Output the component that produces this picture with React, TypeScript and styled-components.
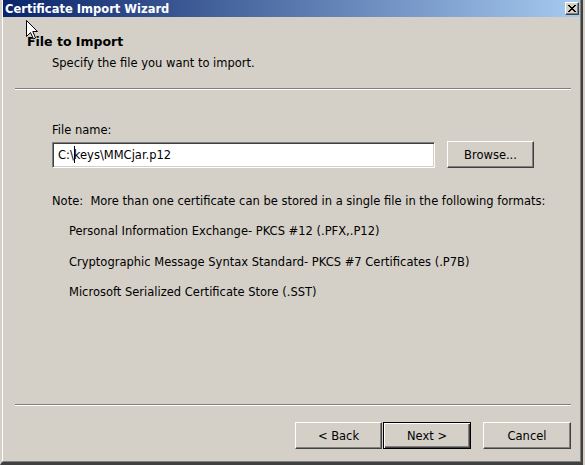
import styled, { createGlobalStyle } from "styled-components"

const GlobalStyle = createGlobalStyle`
  html, body {
    margin: 0;
    padding: 0;
    background: #d4d0c8;
    overflow: hidden;
  }
  body {
    font-family: "DejaVu Sans", "Liberation Sans", sans-serif;
    font-size: 11.5px;
    color: #000;
  }
`

const App = () => {
  return (
    <>
      <GlobalStyle />
      <Window>
        <Frame>
          <TitleBar>
            <TitleText>Certificate Import Wizard</TitleText>
            <CloseButton>
              <svg width="8" height="7" viewBox="0 0 8 7">
                <path d="M0 0h2v1h1v1h2V1h1V0h2v1H7v1H6v1H5v1h1v1h1v1h1v1H6V6H5V5H3v1H2v1H0V6h1V5h1V4h1V3H2V2H1V1H0z" fill="#000" />
              </svg>
            </CloseButton>
          </TitleBar>

          <Header>
            <Heading>File to Import</Heading>
            <SubHeading>Specify the file you want to import.</SubHeading>
          </Header>
          <Separator />

          <Content>
            <Label>File name:</Label>
            <FileRow>
              <TextBox>
                C:\<Caret />keys\MMCjar.p12
              </TextBox>
              <Button>Browse...</Button>
            </FileRow>
            <Note>Note:&nbsp; More than one certificate can be stored in a single file in the following formats:</Note>
            <FormatList>
              <li>Personal Information Exchange- PKCS #12 (.PFX,.P12)</li>
              <li>Cryptographic Message Syntax Standard- PKCS #7 Certificates (.P7B)</li>
              <li>Microsoft Serialized Certificate Store (.SST)</li>
            </FormatList>
          </Content>

          <Separator />
          <Footer>
            <Button>&lt; Back</Button>
            <Button isDefault wide>Next &gt;</Button>
            <Button wide gap={12}>Cancel</Button>
          </Footer>
        </Frame>

        <Pointer width="12" height="20" viewBox="0 0 12 20">
          <path d="M0.5 0.5 V16.5 L4.5 12.5 L7.5 19 L9.5 18 L6.8 11.5 H11.5 Z" fill="#fff" stroke="#000" strokeWidth="1" />
        </Pointer>
      </Window>
    </>
  )
}

type ButtonProps = {
  isDefault?: boolean;
  wide?: boolean;
  gap?: number;
}

const Window = styled.div`
  position: relative;
  width: 583px;
  height: 465px;
  box-sizing: border-box;
  border-left: 2px solid #d4d0c8;
  border-right: 2px solid #404040;
  border-bottom: 3px solid #404040;
`

const Frame = styled.div`
  height: 100%;
  box-sizing: border-box;
  display: flex;
  flex-direction: column;
  border-left: 1px solid #fff;
  border-right: 1px solid #808080;
  border-bottom: 1px solid #808080;
`

const TitleBar = styled.div`
  height: 17px;
  flex-shrink: 0;
  display: flex;
  align-items: center;
  justify-content: space-between;
  padding: 0 1px 0 2px;
  background: linear-gradient(to right, #0a246a, #a6caf0);
`

const TitleText = styled.span`
  color: #fff;
  font-weight: bold;
  font-size: 11.5px;
`

const CloseButton = styled.div`
  width: 14px;
  height: 13px;
  box-sizing: border-box;
  display: flex;
  align-items: center;
  justify-content: center;
  background: #d4d0c8;
  border-top: 1px solid #fff;
  border-left: 1px solid #fff;
  border-right: 1px solid #404040;
  border-bottom: 1px solid #404040;
  box-shadow: inset -1px -1px 0 #808080;
`

const Header = styled.div`
  height: 71px;
  flex-shrink: 0;
  box-sizing: border-box;
  padding: 17px 0 0 24px;
`

const Heading = styled.div`
  font-weight: bold;
  font-size: 12.5px;
  line-height: 16px;
`

const SubHeading = styled.div`
  margin: 6px 0 0 25px;
  line-height: 14px;
`

const Separator = styled.div`
  height: 0;
  flex-shrink: 0;
  margin: 0 9px 0 12px;
  border-top: 1px solid #808080;
  border-bottom: 1px solid #fff;
`

const Content = styled.div`
  flex: 1;
  padding: 33px 0 0 49px;
  line-height: 14px;
`

const Label = styled.div`
  margin-bottom: 4px;
`

const FileRow = styled.div`
  display: flex;
  align-items: center;
  gap: 12px;
`

const TextBox = styled.div`
  width: 383px;
  height: 26px;
  box-sizing: border-box;
  display: flex;
  align-items: center;
  padding-left: 5px;
  background: #fff;
  border-top: 1px solid #808080;
  border-left: 1px solid #808080;
  border-right: 1px solid #fff;
  border-bottom: 1px solid #fff;
  box-shadow: inset 1px 1px 0 #404040, inset -1px -1px 0 #d4d0c8;
  white-space: pre;
`

const Caret = styled.span`
  display: inline-block;
  width: 1px;
  height: 17px;
  margin-right: -1px;
  background: #000;
`

const Button = styled.div<ButtonProps>`
  width: ${(props) => props.wide ? '88px' : '87px'};
  height: 27px;
  box-sizing: border-box;
  display: flex;
  align-items: center;
  justify-content: center;
  margin-left: ${(props) => props.gap ? `${props.gap - 1}px` : '0'};
  background: #d4d0c8;
  border: 1px solid;
  border-color: ${(props) => props.isDefault ? '#000' : '#fff #404040 #404040 #fff'};
  box-shadow: ${(props) => props.isDefault
    ? 'inset 1px 1px 0 #fff, inset -1px -1px 0 #404040, inset -2px -2px 0 #808080'
    : 'inset -1px -1px 0 #808080'};
`

const Note = styled.div`
  margin-top: 26px;
`

const FormatList = styled.ul`
  list-style: none;
  margin: 16px 0 0;
  padding: 0 0 0 17px;
  display: flex;
  flex-direction: column;
  gap: 16.5px;
`

const Footer = styled.div`
  height: 55px;
  flex-shrink: 0;
  box-sizing: border-box;
  display: flex;
  justify-content: flex-end;
  gap: 1px;
  padding: 16px 9px 0 0;
`

const Pointer = styled.svg`
  position: absolute;
  left: 24px;
  top: 20px;
`

export default App
